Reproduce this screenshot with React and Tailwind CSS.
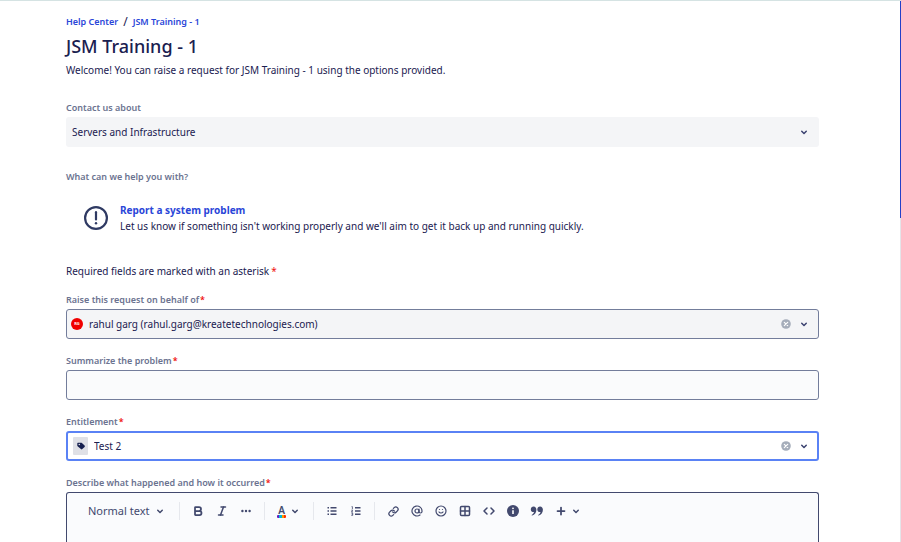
import { AtSign, Bold, Code, Grid2x2, Italic, Link, Plus, Smile } from "lucide-react";

function ChevronDown() {
  return (
    <svg viewBox="0 0 24 24" className="size-[18px] shrink-0" fill="currentColor" aria-hidden="true">
      <path d="M8.292 10.293a1.009 1.009 0 0 0 0 1.419l2.939 2.965c.218.215.5.322.779.322s.556-.107.769-.322l2.93-2.955a1.01 1.01 0 0 0 0-1.419.987.987 0 0 0-1.406 0l-2.298 2.317-2.307-2.327a.99.99 0 0 0-1.406 0z" />
    </svg>
  );
}

function ClearIcon() {
  return (
    <svg viewBox="0 0 18 18" className="size-[18px]" aria-hidden="true">
      <circle cx="9" cy="9" r="4.8" fill="#a5adba" />
      <path d="M7.3 7.3l3.4 3.4M10.7 7.3l-3.4 3.4" stroke="#fff" strokeWidth="1.2" strokeLinecap="round" />
    </svg>
  );
}

function ProblemIcon() {
  return (
    <svg viewBox="0 0 24 24" className="size-6 shrink-0" fill="none" stroke="#2f3a63" aria-hidden="true">
      <circle cx="12" cy="12" r="10.9" strokeWidth="2.2" />
      <path d="M12 6.2v7.2" strokeWidth="2.2" strokeLinecap="round" />
      <circle cx="12" cy="17.2" r="1.2" fill="#2f3a63" stroke="none" />
    </svg>
  );
}

function TagIcon() {
  return (
    <svg viewBox="0 0 10 10" className="size-2.5" aria-hidden="true">
      <path
        d="M1.900 1.700h3.200c.3 0 .6.1.8.3l2.700 2.500c.4.4.4 1 0 1.400L6.300 8.100c-.4.4-1 .4-1.400 0L1.600 5.300c-.2-.2-.3-.5-.3-.8V2.300c0-.3.300-.6.600-.6z"
        fill="#172050"
      />
      <circle cx="3.300" cy="3.500" r=".8" fill="#dfe0e6" />
    </svg>
  );
}

function BulletListIcon() {
  return (
    <svg viewBox="0 0 18 18" className="size-[18px]" fill="currentColor" aria-hidden="true">
      <path d="M4.500 5H6v1.500H4.500zM4.500 8.300H6v1.500H4.500zM4.500 11.500H6V13H4.500zM7.500 5h6v1.500h-6zM7.500 8.300h6v1.500h-6zM7.500 11.500h6V13h-6z" />
    </svg>
  );
}

function NumberListIcon() {
  return (
    <svg viewBox="0 0 18 18" className="size-[18px]" fill="none" stroke="currentColor" aria-hidden="true">
      <path d="M8 5.700h5.500M8 9h5.500M8 12.300h5.500" strokeWidth="1.500" />
      <path d="M4.600 4.600h.8v2.600M4.300 8.200h1.400L4.500 9.900h1.500M4.300 11h1.400v2.400H4.300M4.700 12.200h1" strokeWidth=".8" />
    </svg>
  );
}

function MoreIcon() {
  return (
    <svg viewBox="0 0 18 18" className="size-[18px]" fill="currentColor" aria-hidden="true">
      <circle cx="5.400" cy="9" r="1.200" />
      <circle cx="9" cy="9" r="1.200" />
      <circle cx="12.600" cy="9" r="1.200" />
    </svg>
  );
}

function InfoIcon() {
  return (
    <svg viewBox="0 0 18 18" className="size-[18px]" aria-hidden="true">
      <circle cx="9" cy="9" r="6" fill="currentColor" />
      <circle cx="9" cy="6.300" r=".9" fill="#fff" />
      <path d="M9 8.300v3.700" stroke="#fff" strokeWidth="1.600" />
    </svg>
  );
}

function QuoteIcon() {
  return (
    <svg viewBox="0 0 18 18" className="size-[18px]" fill="currentColor" aria-hidden="true">
      <path d="M5.600 4.600c1.700 0 2.800 1.300 2.800 3.200 0 2.800-1.700 5.200-4.200 5.800-.5.100-.7-.5-.3-.8 1.200-.7 1.900-1.600 2.100-2.700-2 .1-3.200-1-3.200-2.700 0-1.600 1.200-2.800 2.800-2.800z" />
      <path d="M12.100 4.600c1.700 0 2.800 1.300 2.800 3.200 0 2.800-1.700 5.200-4.200 5.800-.5.100-.7-.5-.3-.8 1.200-.7 1.900-1.600 2.100-2.700-2 .1-3.200-1-3.200-2.700 0-1.600 1.200-2.800 2.800-2.800z" />
    </svg>
  );
}

function FieldLabel({ htmlFor, required, children }) {
  return (
    <label htmlFor={htmlFor} className="block text-[9px] leading-[18px] font-semibold text-[#6b7390]">
      {children}
      {required && <span className="pl-px text-[#f01010]">*</span>}
    </label>
  );
}

function SelectField({ id, value, icon, clearable, className }) {
  return (
    <div className={`flex h-[30px] items-center rounded-[3px] ${className}`}>
      {icon}
      <select id={id} defaultValue={value} className="min-w-0 flex-1 appearance-none bg-transparent outline-none">
        <option>{value}</option>
      </select>
      {clearable && (
        <button type="button" aria-label="Clear">
          <ClearIcon />
        </button>
      )}
      <span className="text-[#3b4270]">
        <ChevronDown />
      </span>
    </div>
  );
}

function ToolButton({ label, children }) {
  return (
    <button type="button" aria-label={label} className="flex size-6 items-center justify-center">
      {children}
    </button>
  );
}

function Separator() {
  return <span className="mx-1.5 h-[18px] w-px bg-[#e6e8ed]" />;
}

function Toolbar() {
  return (
    <div className="flex items-center pt-1.5 pl-[21px] text-[#42496e]">
      <button type="button" className="flex w-[85px] items-center gap-0.5 text-[11px] leading-6 whitespace-nowrap">
        Normal text
        <ChevronDown />
      </button>
      <Separator />
      <ToolButton label="Bold">
        <Bold size={12} strokeWidth={3.5} />
      </ToolButton>
      <ToolButton label="Italic">
        <Italic size={12} strokeWidth={3} />
      </ToolButton>
      <ToolButton label="More formatting">
        <MoreIcon />
      </ToolButton>
      <Separator />
      <button type="button" aria-label="Text color" className="flex h-6 w-9 items-center pl-1.5">
        <span className="flex flex-col items-center">
          <span className="text-[10px] leading-[10px] font-semibold">A</span>
          <span className="flex h-[3px] w-[9px] overflow-hidden rounded-[1px]">
            <span className="flex-1 bg-[#6520c0]" />
            <span className="flex-1 bg-[#00b8d9]" />
            <span className="flex-1 bg-[#ff9a00]" />
            <span className="flex-1 bg-[#ff2b00]" />
          </span>
        </span>
        <ChevronDown />
      </button>
      <Separator />
      <ToolButton label="Bullet list">
        <BulletListIcon />
      </ToolButton>
      <ToolButton label="Numbered list">
        <NumberListIcon />
      </ToolButton>
      <Separator />
      <ToolButton label="Link">
        <Link size={11} strokeWidth={2.8} />
      </ToolButton>
      <ToolButton label="Mention">
        <AtSign size={12} strokeWidth={2.4} />
      </ToolButton>
      <ToolButton label="Emoji">
        <Smile size={12} strokeWidth={2.4} />
      </ToolButton>
      <ToolButton label="Table">
        <Grid2x2 size={12} strokeWidth={3} />
      </ToolButton>
      <ToolButton label="Code snippet">
        <Code size={12} strokeWidth={3} />
      </ToolButton>
      <ToolButton label="Info panel">
        <InfoIcon />
      </ToolButton>
      <ToolButton label="Quote">
        <QuoteIcon />
      </ToolButton>
      <button type="button" aria-label="Insert" className="flex h-6 items-center pl-1.5">
        <Plus size={12} strokeWidth={3.5} />
        <ChevronDown />
      </button>
    </div>
  );
}

export default function App() {
  return (
    <div className="flex min-h-screen border-t border-[#d5e3e3] bg-white font-['Noto_Sans','Open_Sans',sans-serif] text-[10px] leading-[18px] text-[#1a2050]">
      <main className="flex min-w-0 flex-1 flex-col pt-3 pr-[81px] pl-[66px]">
        <nav className="flex gap-[5px] text-[9px] font-semibold text-[#2a46d8]">
          <a href="#help-center">Help Center</a>
          <span className="text-xs leading-[18px] font-normal text-[#1a2050]">/</span>
          <a href="#jsm-training">JSM Training - 1</a>
        </nav>
        <h1 className="mt-px text-lg leading-7 font-medium">JSM Training - 1</h1>
        <p className="mt-px">Welcome! You can raise a request for JSM Training - 1 using the options provided.</p>

        <form className="mt-5 flex flex-1 flex-col">
          <FieldLabel htmlFor="contact">Contact us about</FieldLabel>
          <SelectField id="contact" value="Servers and Infrastructure" className="bg-[#f4f5f7] px-1.5" />

          <h2 className="mt-[21px] text-[9px] font-semibold text-[#6b7390]">What can we help you with?</h2>
          <div className="mt-4 flex items-center gap-3 pl-[18px] leading-4">
            <ProblemIcon />
            <div>
              <a href="#report" className="block font-bold text-[#2a46d8]">
                Report a system problem
              </a>
              <p>Let us know if something isn't working properly and we'll aim to get it back up and running quickly.</p>
            </div>
          </div>

          <p className="mt-7">
            Required fields are marked with an asterisk
            <span className="pl-0.5 text-[#f01010]">*</span>
          </p>

          <div className="mt-[11px] flex flex-1 flex-col gap-[13px]">
            <div>
              <FieldLabel htmlFor="behalf" required>Raise this request on behalf of</FieldLabel>
              <SelectField
                id="behalf"
                value="rahul garg (rahul.garg@kreatetechnologies.com)"
                clearable
                className="border border-[#737d9b] bg-[#f4f5f7] pr-[5px] pl-1"
                icon={
                  <span className="mr-1.5 flex size-3 shrink-0 items-center justify-center rounded-full bg-[#f00000] text-[4px] leading-none font-bold text-white">
                    RG
                  </span>
                }
              />
            </div>
            <div>
              <FieldLabel htmlFor="summary" required>Summarize the problem</FieldLabel>
              <input
                id="summary"
                type="text"
                className="block h-[30px] w-full rounded-[3px] border border-[#737d9b] bg-[#fafbfc] px-1.5 outline-none"
              />
            </div>
            <div>
              <FieldLabel htmlFor="entitlement" required>Entitlement</FieldLabel>
              <SelectField
                id="entitlement"
                value="Test 2"
                clearable
                className="border-2 border-[#5a82f5] bg-white pr-1 pl-[5px]"
                icon={
                  <span className="mr-1.5 flex h-[18px] w-[15px] shrink-0 items-center justify-center rounded-[1px] bg-[#dfe0e6]">
                    <TagIcon />
                  </span>
                }
              />
            </div>
            <div className="flex flex-1 flex-col">
              <FieldLabel htmlFor="description" required>Describe what happened and how it occurred</FieldLabel>
              <div className="flex flex-1 flex-col rounded-t-[3px] border border-b-0 border-[#42496e] bg-[#fafbfd]">
                <Toolbar />
                <textarea id="description" rows={1} className="min-h-0 w-full flex-1 resize-none bg-transparent px-5 outline-none" />
              </div>
            </div>
          </div>
        </form>
      </main>
      <div className="w-px shrink-0 bg-[#e4e5e9]">
        <div className="h-[217px] bg-[#2440c8]" />
      </div>
    </div>
  );
}
